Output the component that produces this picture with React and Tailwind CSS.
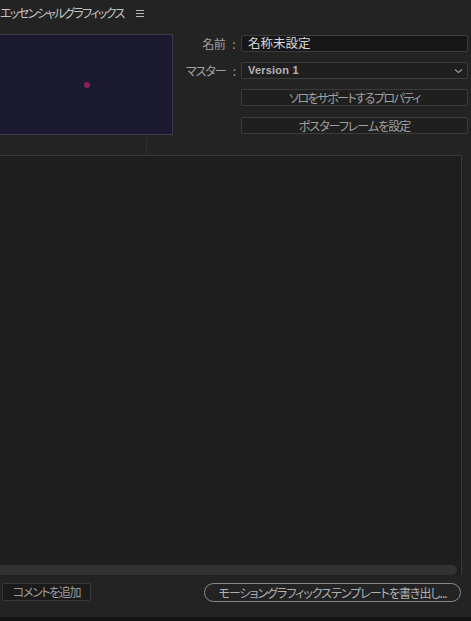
import React from "react";

const jp = "font-['Noto_Sans_CJK_JP',sans-serif] [font-feature-settings:'palt']";

export default function App() {
  return (
    <div className={`w-[471px] h-[621px] bg-[#232323] flex flex-col overflow-hidden ${jp}`}>
      {/* header */}
      <div className="h-[26px] flex items-center shrink-0">
        <span className="text-[12px] leading-none text-[#c4c4c4] whitespace-nowrap tracking-[-1.6px]">エッセンシャルグラフィックス</span>
        <div className="ml-[12px] flex flex-col gap-[2px] w-[8px] mt-[1px]">
          <div className="h-px bg-[#b8b8b8]" />
          <div className="h-px bg-[#b8b8b8]" />
          <div className="h-px bg-[#b8b8b8]" />
        </div>
      </div>

      {/* top section */}
      <div className="flex pt-[8px] shrink-0">
        <div className="-ml-px w-[174px] h-[101px] bg-[#1c1a30] border border-[#3a3a44] flex items-center justify-center">
          <div className="w-[6px] h-[6px] rounded-full bg-[#8a1f5e] ml-[1px] mt-[1px]" />
        </div>
        <div className="ml-[8px] grid grid-cols-[60px_227px] gap-y-[10px] content-start pt-[1px]">
          <div className="h-[17px] flex items-center justify-end pr-[6px] text-[12px] text-[#a0a0a0] whitespace-nowrap tracking-[-0.5px]">
            <span>名前</span><span className="ml-[7px]">:</span>
          </div>
          <div className="h-[17px] bg-[#171717] border border-[#3c3c3c] rounded-[2px] flex items-center pl-[6px] text-[12.5px] text-[#d8d8d8]">名称未設定</div>

          <div className="h-[17px] flex items-center justify-end pr-[6px] text-[12px] text-[#a0a0a0] whitespace-nowrap tracking-[-1px]">
            <span>マスター</span><span className="ml-[7px]">:</span>
          </div>
          <div className="h-[17px] bg-[#1f1f1f] border border-[#3c3c3c] rounded-[2px] flex items-center pl-[6px] pr-[4px]">
            <span className="font-['Liberation_Sans',sans-serif] text-[11px] font-bold text-[#b4b4b4] tracking-[0.2px]">Version 1</span>
            <svg className="ml-auto" width="9" height="6" viewBox="0 0 9 6" fill="none">
              <path d="M1 1.5 L4.5 4.5 L8 1.5" stroke="#9a9a9a" strokeWidth="1.2" />
            </svg>
          </div>

          <div />
          <div className="h-[17px] bg-[#1f1f1f] border border-[#3c3c3c] rounded-[2px] flex items-center justify-center text-[12px] text-[#a0a0a0] tracking-[-1.5px]">ソロをサポートするプロパティ</div>

          <div />
          <div className="h-[17px] mt-[1px] bg-[#1f1f1f] border border-[#3c3c3c] rounded-[2px] flex items-center justify-center text-[12px] text-[#a0a0a0] tracking-[-1px]">ポスターフレームを設定</div>
        </div>
      </div>

      {/* divider */}
      <div className="h-[20px] shrink-0 flex">
        <div className="ml-[146px] mt-[2px] w-px h-[17px] bg-[#2f2f2f]" />
      </div>

      {/* main panel */}
      <div className="-ml-px w-[463px] h-[420px] shrink-0 bg-[#1e1e1e] border-t border-r border-[#383838] rounded-tr-[2px] flex flex-col justify-end">
        <div className="w-[458px] h-[10px] bg-[#323232] rounded-r-[5px]" />
      </div>

      {/* bottom bar */}
      <div className="h-[42px] shrink-0 flex items-start pt-[8px]">
        <div className="ml-[2px] w-[89px] h-[18px] bg-[#1b1b1b] border border-[#383838] rounded-[2px] flex items-center justify-center text-[12px] text-[#9c9c9c] tracking-[-1.4px]">コメントを追加</div>
        <div className="ml-auto mr-[10px] w-[257px] h-[19px] border border-[#8a8a8a] rounded-full flex items-center justify-center text-[12px] text-[#b0b0b0] whitespace-nowrap tracking-[-1px]">モーショングラフィックステンプレートを書き出し...</div>
      </div>

      <div className="flex-1 bg-[#141414]" />
    </div>
  );
}
